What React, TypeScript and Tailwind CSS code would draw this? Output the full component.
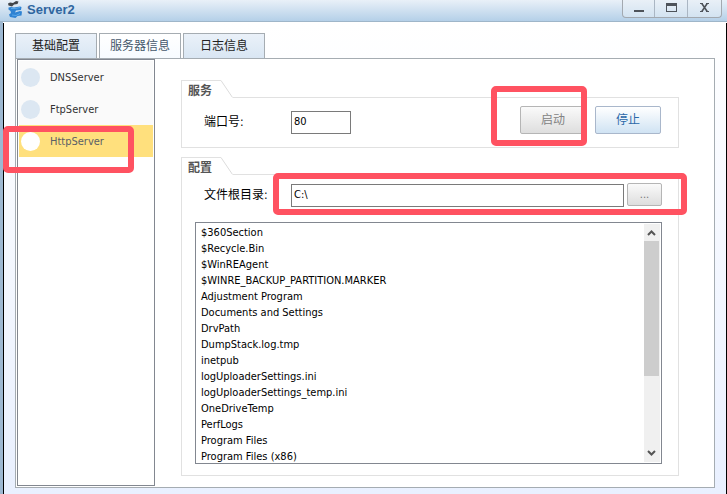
import React, { useState } from 'react';

const tabs = ['基础配置', '服务器信息', '日志信息'];
const servers = ['DNSServer', 'FtpServer', 'HttpServer'];
const files = [
  '$360Section',
  '$Recycle.Bin',
  '$WinREAgent',
  '$WINRE_BACKUP_PARTITION.MARKER',
  'Adjustment Program',
  'Documents and Settings',
  'DrvPath',
  'DumpStack.log.tmp',
  'inetpub',
  'logUploaderSettings.ini',
  'logUploaderSettings_temp.ini',
  'OneDriveTemp',
  'PerfLogs',
  'Program Files',
  'Program Files (x86)',
];

// Red frame drawn over the thing it points at
const Mark: React.FC<{ className: string }> = ({ className }) => (
  <span className={`pointer-events-none absolute z-10 rounded-[5px] border-6 border-[#ff5261] ${className}`} />
);

const Logo = () => (
  <svg width="15" height="18" viewBox="0 0 15 18">
    <path d="M0 3.500 2 2.500 5 3 8 1l2.500.5L9.500 4 6 4.500 4 6.500.5 5.500z" fill="#42464b" />
    <path d="M.5 7.500 3 7l3 .5L12 6.500l1.500.5-.5 3-5 .5L7 12.500l5-1.500 2 .5-.5 4-4 .5L7.500 18 2 17l-1-2.500L3 13 2.500 11 .5 9.500z" fill="#2f83d3" />
    <path d="M3 8.500h4l5-1M4 15l4 .5 4-2" stroke="#5aa8ea" fill="none" />
  </svg>
);

const WindowButtons = () => (
  <div className="mr-[5px] flex h-[18px] divide-x divide-[#aab6c3] rounded-b-[4px] border border-t-0 border-[#a3a9b0] bg-linear-to-b from-[#e9f0f7] to-[#d3e3f1]">
    <button type="button" aria-label="Minimize" className="flex w-8 justify-center pt-2.5">
      <span className="h-0.5 w-2.5 bg-[#4e535a]" />
    </button>
    <button type="button" aria-label="Maximize" className="flex w-[33px] justify-center pt-[3px]">
      <span className="h-[9px] w-[11px] border border-t-3 border-[#4e535a]" />
    </button>
    <button type="button" aria-label="Close" className="flex w-[33px] justify-center pt-[3px]">
      <svg width="9" height="9" viewBox="0 0 9 9">
        <path d="M1.500 0 7.500 9M7.500 0 1.500 9" stroke="#4e535a" strokeWidth="1.600" />
        <path d="M0 .5h3M6 .5h3M0 8.500h3M6 8.500h3" stroke="#4e535a" />
      </svg>
    </button>
  </div>
);

const Group: React.FC<{ title: string; children: React.ReactNode }> = ({ title, children }) => (
  <section>
    <div className="flex h-[18px]">
      <h2 className="w-10 border-t border-l border-[#e1e1e1] pt-0.5 pl-1.5 text-xs font-bold text-[#555]">{title}</h2>
      <svg width="12" height="18" viewBox="0 0 12 18">
        <path d="M0 .5 11.500 17.500" stroke="#dcdcdc" fill="none" />
      </svg>
      <div className="flex-1 border-b border-[#e1e1e1]" />
    </div>
    <div className="border-x border-b border-[#e1e1e1]">{children}</div>
  </section>
);

const Scrollbar = () => (
  <div className="my-px mr-px flex w-4 flex-col bg-[#f0f0f0]">
    <svg width="15" height="17" viewBox="0 0 15 17">
      <path d="M4 11 7.500 7.500 11 11" stroke="#555" strokeWidth="2" fill="none" />
    </svg>
    <div className="mr-px grow-[136] bg-[#cdcdcd]" />
    <div className="grow-[69]" />
    <svg width="15" height="17" viewBox="0 0 15 17">
      <path d="M4 6 7.500 9.500 11 6" stroke="#555" strokeWidth="2" fill="none" />
    </svg>
  </div>
);

const App: React.FC = () => {
  const [tab, setTab] = useState('服务器信息');
  const [server, setServer] = useState('HttpServer');
  const [port, setPort] = useState('80');
  const [root, setRoot] = useState('C:\\');

  return (
    <div className="flex min-h-screen flex-col bg-white font-['DejaVu_Sans_Condensed','Noto_Sans_CJK_SC',sans-serif] text-[11px] leading-4 text-black">
      <header className="flex h-[22px] items-start border-b border-[#9fb6c9] bg-linear-to-b from-[#e9f0f8] to-[#b4d0e8] pl-2">
        <Logo />
        <h1 className="ml-1 flex-1 pt-0.5 font-['Liberation_Sans',sans-serif] text-[13px] leading-4 font-bold text-[#2f669f]">Server2</h1>
        <WindowButtons />
      </header>

      <div className="flex flex-1 border-l-3 border-[#9db8d2]">
        <main className="mt-px flex flex-1 flex-col border-x border-black bg-linear-to-b from-white to-[#e9f0ff] pt-2.5 pr-[11px] pb-1.5 pl-[11px]">
          <nav className="flex gap-0.5">
            {tabs.map((t) => (
              <button
                key={t}
                type="button"
                onClick={() => setTab(t)}
                className={`h-[25px] w-[82px] border border-b-0 border-[#a5acb2] text-xs ${
                  t === tab ? 'bg-linear-to-b from-white to-[#f7fbff] text-[#46586c]' : 'bg-linear-to-b from-[#eaf1f9] to-[#d9e6f3] text-[#222]'
                }`}
              >
                {t}
              </button>
            ))}
          </nav>

          <div className="flex flex-1 border border-[#a5acb2] bg-white px-px pb-px">
            <ul className="w-[138px] border border-[#828790] p-px">
              {servers.map((s) => (
                <li key={s} className="relative">
                  <button
                    type="button"
                    onClick={() => setServer(s)}
                    className={`flex h-8 w-full items-center gap-2.5 pl-0.5 text-left ${
                      s === server ? 'bg-[#ffe07d] text-[#5b6067]' : 'bg-[#fafafa] text-[#333]'
                    }`}
                  >
                    <span className={`size-[19px] rounded-full ${s === server ? 'bg-white' : 'bg-[#dce7f2]'}`} />
                    <span className="pt-0.5">{s}</span>
                  </button>
                  {s === 'HttpServer' && <Mark className="top-px right-[19px] -bottom-4 -left-4" />}
                </li>
              ))}
            </ul>

            <div className="flex flex-1 flex-col gap-[9px] pt-[21px] pr-[34px] pb-2.5 pl-[26px]">
              <Group title="服务">
                <div className="flex h-[49px] items-start pt-2 pr-[17px] pl-[22px]">
                  <label htmlFor="port" className="w-[87px] pt-2 text-xs">端口号:</label>
                  <input
                    id="port"
                    value={port}
                    onChange={(e) => setPort(e.target.value)}
                    className="mt-[5px] h-[23px] w-[60px] border border-[#7a7a7a] bg-white px-0.5 pb-0.5 outline-none"
                  />
                  <div className="ml-auto flex gap-[9px]">
                    <div className="relative">
                      <button type="button" className="h-7 w-[66px] rounded-[2px] border border-[#b5b5b5] bg-linear-to-b from-[#fafafa] to-[#dedede] text-xs text-[#838383]">
                        启动
                      </button>
                      <Mark className="-top-5 -right-px -bottom-3 -left-[29px]" />
                    </div>
                    <button type="button" className="h-7 w-[66px] rounded-[2px] border border-[#a9b7cb] bg-linear-to-b from-white to-[#d0e3f3] text-xs text-[#2b68a8]">
                      停止
                    </button>
                  </div>
                </div>
              </Group>

              <Group title="配置">
                <div className="flex items-start pt-2 pr-4 pl-[22px]">
                  <label htmlFor="root" className="w-[87px] pt-1 text-xs">文件根目录:</label>
                  <div className="relative flex flex-1 gap-[3px]">
                    <input
                      id="root"
                      value={root}
                      onChange={(e) => setRoot(e.target.value)}
                      className="mt-px h-[23px] min-w-0 flex-1 border border-[#7a7a7a] bg-white px-0.5 pb-0.5 outline-none"
                    />
                    <button type="button" className="h-[23px] w-[35px] rounded-[2px] border border-[#b5b5b5] bg-linear-to-b from-[#fafafa] to-[#dedede] text-[#777]">
                      ...
                    </button>
                    <Mark className="-top-2.5 -right-[25px] -bottom-2 -left-[18px]" />
                  </div>
                </div>
                <div className="mt-[15px] mr-4 mb-[11px] ml-[13px] flex border border-[#828790] bg-white">
                  <ul className="flex-1 pl-[5px] leading-5">
                    {files.map((f) => (
                      <li key={f} className="h-4">{f}</li>
                    ))}
                  </ul>
                  <Scrollbar />
                </div>
              </Group>
            </div>
          </div>
        </main>
      </div>
    </div>
  );
};

export default App;
